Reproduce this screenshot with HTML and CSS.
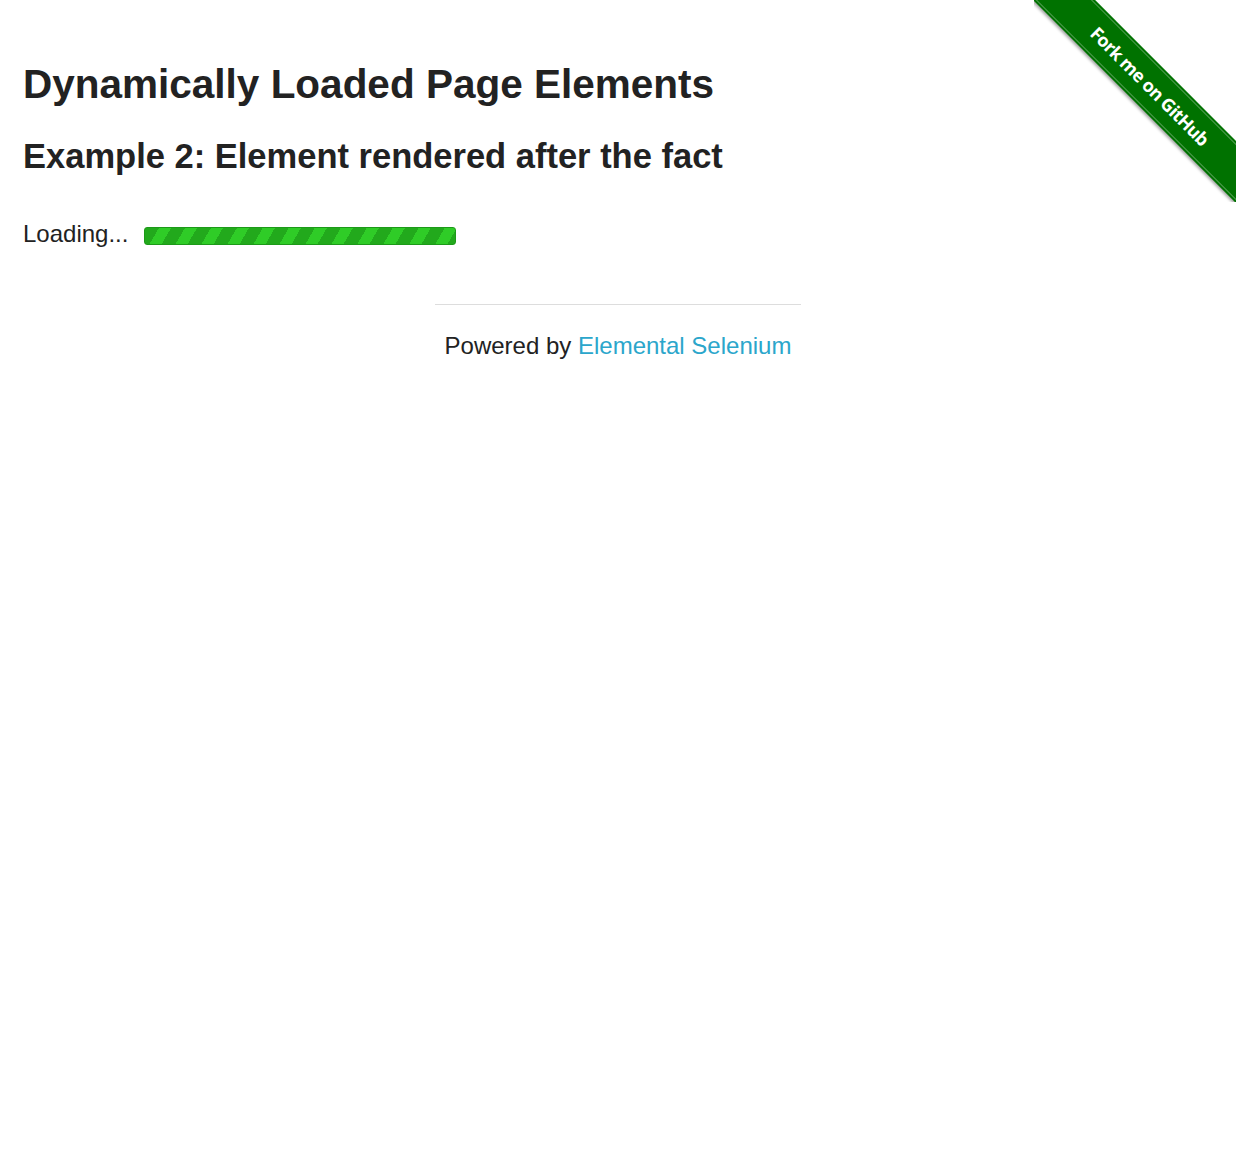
FILE: index.html
```html
<!DOCTYPE html>
<html>
<head>
<meta charset="utf-8">
<title>The Internet</title>
<link rel="stylesheet" href="styles.css">
</head>
<body>
<div class="ribbon-wrap">
  <a class="ribbon" href="#"><span class="ribbon-inner">Fork me on GitHub</span></a>
</div>
<div class="content">
  <h3 class="title">Dynamically Loaded Page Elements</h3>
  <h4 class="subtitle">Example 2: Element rendered after the fact</h4>
  <div class="loading">
    <span class="loading-text">Loading...</span>
    <span class="bar"></span>
  </div>
</div>
<div class="footer">
  <hr class="rule">
  <div class="powered">Powered by <a class="link" href="#">Elemental Selenium</a></div>
</div>
</body>
</html>
```
FILE: styles.css
```css
html, body {
  margin: 0;
  padding: 0;
  background: #fff;
}
body {
  font-family: "Liberation Sans", Arial, sans-serif;
  color: #222;
  font-size: 24px;
  position: relative;
  min-height: 1154px;
}
.content {
  padding: 60px 23px 0;
}
.title {
  font-size: 40.5px;
  line-height: 1.2;
  font-weight: bold;
  margin: 0;
}
.subtitle {
  font-size: 34.5px;
  line-height: 1.2;
  font-weight: bold;
  margin: 27px 0 0;
}
.loading {
  display: flex;
  align-items: center;
  gap: 16px;
  margin-top: 43px;
  height: 28px;
}
.loading-text {
  font-size: 24px;
  line-height: 28px;
}
.bar {
  display: block;
  width: 310px;
  height: 16px;
  margin-top: 4px;
  border: 1px solid #1c9a18;
  border-radius: 3px;
  background: repeating-linear-gradient(120deg, #22a91c 0px, #22a91c 12px, #2fcc27 12px, #2fcc27 22.5px);
}
.footer {
  width: 366px;
  margin: 0 auto;
  padding-top: 56px;
  text-align: center;
}
.rule {
  border: 0;
  border-top: 1px solid #ddd;
  margin: 0;
  height: 0;
}
.powered {
  margin-top: 27px;
  font-size: 24px;
  line-height: 28px;
}
.link {
  color: #2ba6cb;
  text-decoration: none;
}
.ribbon-wrap {
  position: absolute;
  top: 0;
  right: 0;
  width: 202px;
  height: 202px;
  overflow: hidden;
}
.ribbon {
  position: absolute;
  left: -44px;
  top: 64px;
  width: 320px;
  height: 44px;
  background: #007200;
  transform: rotate(45deg);
  box-shadow: 0 2px 3px rgba(0,0,0,0.35);
  text-decoration: none;
  display: flex;
  align-items: center;
  justify-content: center;
}
.ribbon-inner {
  display: flex;
  align-items: center;
  justify-content: center;
  width: 100%;
  height: 38px;
  border-top: 1px solid rgba(255,255,255,0.3);
  border-bottom: 1px solid rgba(255,255,255,0.3);
  color: #fff;
  font-family: "Open Sans", "DejaVu Sans", sans-serif;
  font-weight: bold;
  font-size: 18px;
  letter-spacing: -0.6px;
}
```
